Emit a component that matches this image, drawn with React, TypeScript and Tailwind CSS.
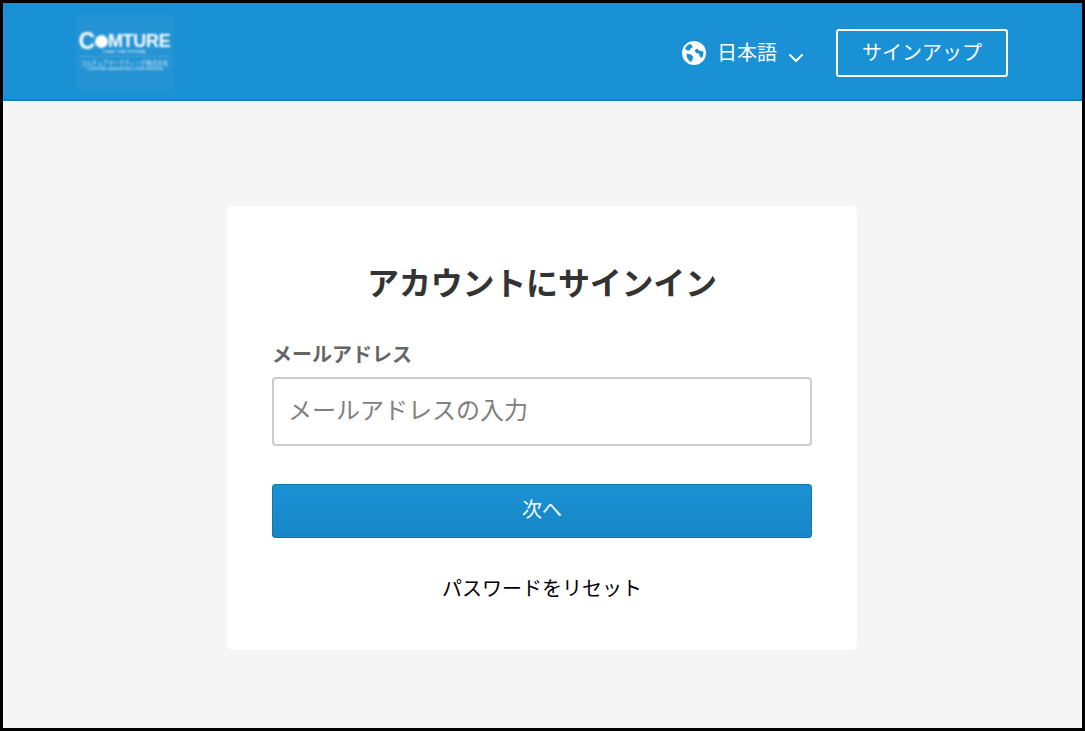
import { ChevronDown } from "lucide-react";

const fontStack = "font-['Noto_Sans_CJK_JP','Noto_Sans',sans-serif]";

function Logo() {
  return (
    <div className="w-[99px] h-[77px] bg-[#2393d3] flex flex-col items-center pt-[20px] text-white blur-[0.8px] overflow-hidden">
      <div className="font-['Liberation_Sans',sans-serif] font-bold text-[18px] leading-[15px] tracking-[-0.3px] flex items-center">
        <span className="text-[23px]">C</span>
        <span className="w-[13px] h-[13px] rounded-full bg-white inline-block" />
        <span>MTURE</span>
      </div>
      <div className="font-['Liberation_Sans',sans-serif] text-[4px] leading-[5px] font-bold tracking-[0.4px] text-white/80">
        LEAD THE FUTURE
      </div>
      <div className="w-[94px] h-px bg-white/20 mt-[2px]" />
      <div className="text-[5.5px] leading-[8px] mt-[2px] text-white/80">
        コムチュアマーケティング株式会社
      </div>
      <div className="font-['Liberation_Sans',sans-serif] text-[4px] leading-[4px] font-bold text-white/65">
        COMTURE MARKETING CORPORATION
      </div>
    </div>
  );
}

function Globe() {
  return (
    <svg width="24" height="24" viewBox="0 0 24 24" className="shrink-0 mb-[1px] ml-px">
      <circle cx="12" cy="12" r="12" fill="#ffffff" />
      <path
        d="M7.6 3 C5.6 4 4 5.6 3 7.6 L5 9.6 L7.6 9.4 L8.6 7.4 L10.6 6.4 L9.8 4 Z"
        fill="#1a91d4"
      />
      <path
        d="M12.6 9.4 L15 7.6 L17 9.4 L21.4 10.4 C21.6 13 21 15.4 19.6 17.2 L17.8 15.6 L17 12.8 L14.2 12 Z"
        fill="#1a91d4"
      />
      <path
        d="M4.6 12.6 L9 13.4 L11.2 15.8 L10.4 19 L9 21 C7 20 5.2 17.6 4.6 15 Z"
        fill="#1a91d4"
      />
    </svg>
  );
}

export default function App() {
  return (
    <div
      className={`h-[731px] w-[1085px] border-[3px] border-black bg-[#f5f5f5] flex flex-col ${fontStack}`}
    >
      {/* Header */}
      <header className="h-[98px] shrink-0 bg-[#1a91d4] border-b-2 border-[#1680b8] flex items-center justify-between pl-[72px] pr-[74px] text-white">
        <div className="mt-[3px] -ml-px pl-px">
          <Logo />
        </div>
        <div className="flex items-center mt-[4px]">
          <Globe />
          <span className="ml-[11px] mb-[3px] text-[20px] leading-[28px]">日本語</span>
          <ChevronDown className="ml-[7px] mt-[10px] w-[24px] h-[24px]" strokeWidth={2} />
          <button className="ml-[28px] w-[172px] h-[48px] border-2 border-white rounded-[3px] pb-[3px] text-[20px] leading-[28px] text-white">
            サインアップ
          </button>
        </div>
      </header>

      {/* Sign in */}
      <main className="flex-1 flex justify-center pt-[105px] pr-[1px]">
        <div className="w-[630px] h-[444px] bg-white rounded-[5px] px-[45px] pt-[48px]">
          <h1 className="text-[32px] leading-[54px] font-bold text-[#333333] text-center tracking-[-0.2px]">
            アカウントにサインイン
          </h1>
          <label className="block mt-[32px] text-[20px] leading-[28px] font-bold text-[#666666]">
            メールアドレス
          </label>
          <input
            placeholder="メールアドレスの入力"
            className="block mt-[9px] w-full h-[69px] border-2 border-[#cccccc] rounded-[4px] pl-[14px] pr-[15px] pb-[7px] text-[24px] bg-white outline-none placeholder:text-[#808080]"
          />
          <button className="block mt-[38px] w-full h-[54px] rounded-[3px] border border-[#1377a9] bg-gradient-to-b from-[#1a91d4] to-[#1787c6] pb-[4px] text-white text-[20px]">
            次へ
          </button>
          <div className="mt-[36px] text-center">
            <a href="#reset" className="text-[20px] leading-[28px] text-black">
              パスワードをリセット
            </a>
          </div>
        </div>
      </main>
    </div>
  );
}
